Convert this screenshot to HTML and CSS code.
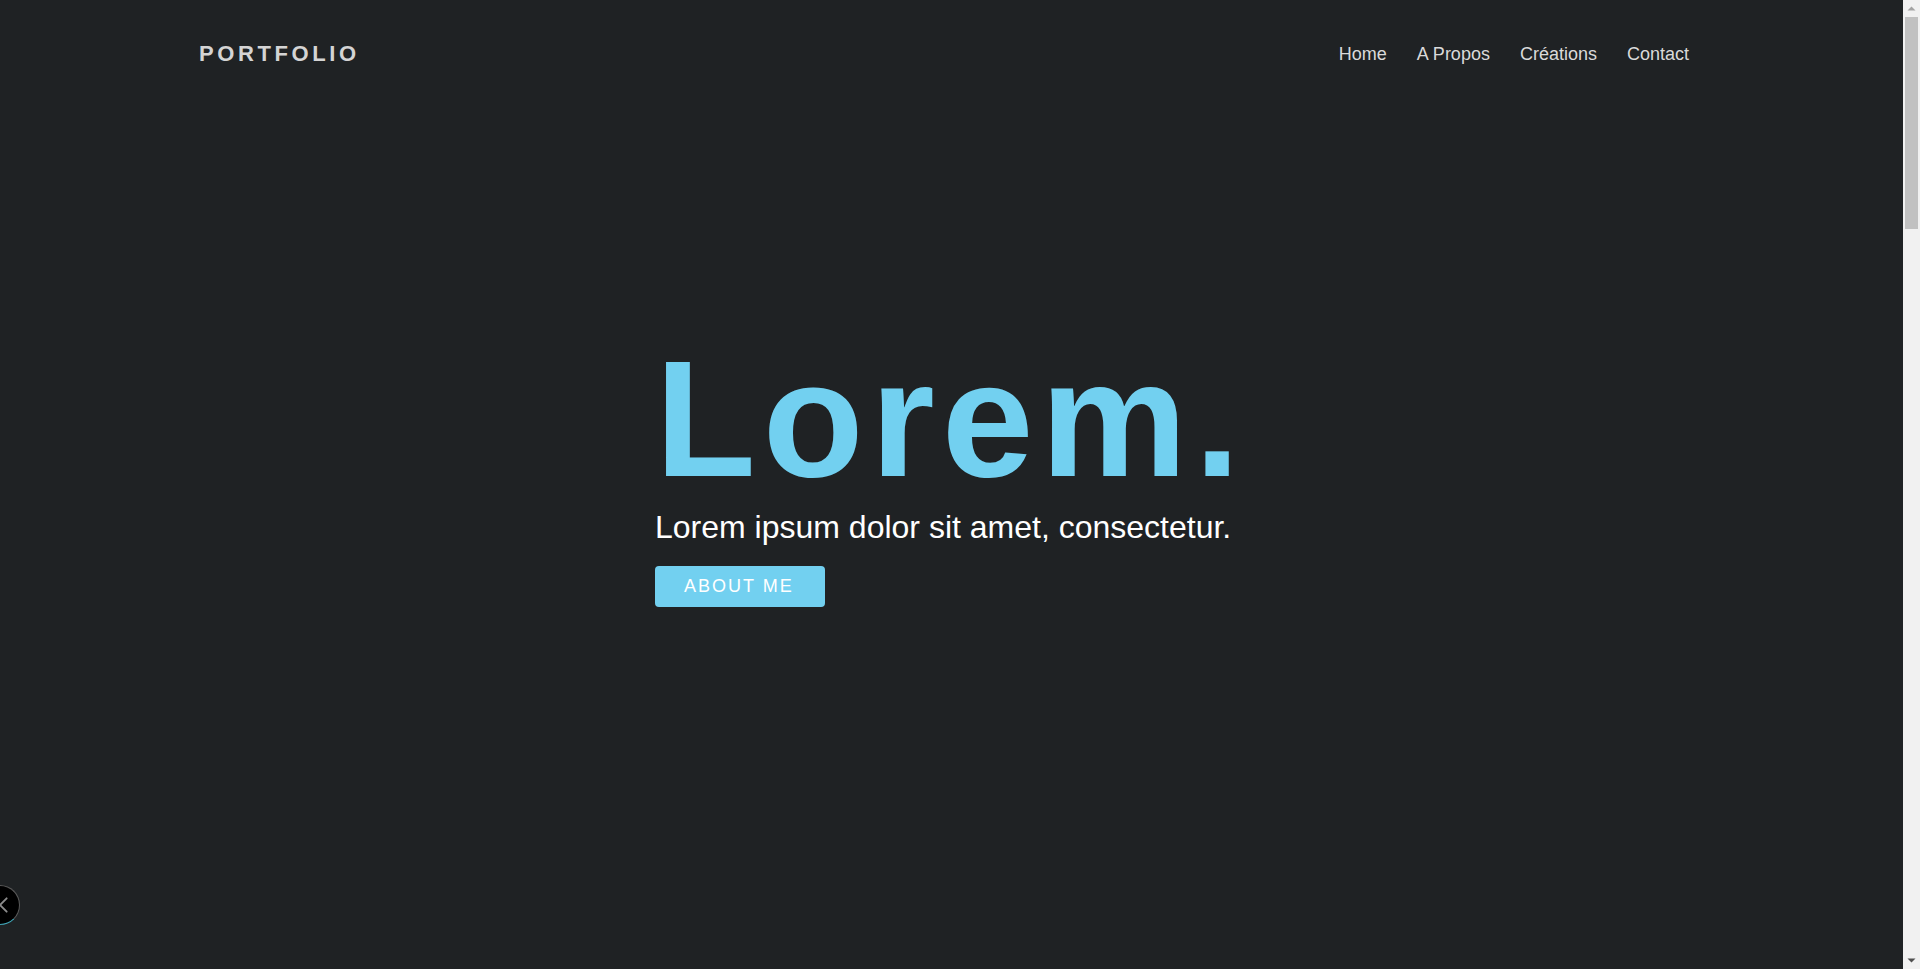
FILE: index.html
```html
<!DOCTYPE html>
<html lang="fr">
<head>
<meta charset="utf-8">
<title>Portfolio</title>
<link rel="stylesheet" href="styles.css">
</head>
<body>
<header class="site-header">
  <a class="logo" href="#home">PORTFOLIO</a>
  <nav class="main-nav">
    <a href="#home">Home</a>
    <a href="#apropos">A Propos</a>
    <a href="#creations">Créations</a>
    <a href="#contact">Contact</a>
  </nav>
</header>
<main>
  <section class="hero" id="home">
    <div class="hero-content">
      <h1 class="hero-title">Lorem.</h1>
      <p class="hero-subtitle">Lorem ipsum dolor sit amet, consectetur.</p>
      <a class="btn" href="#apropos">ABOUT ME</a>
    </div>
  </section>
  <section class="section" id="apropos"></section>
  <section class="section" id="creations"></section>
  <section class="section" id="contact"></section>
</main>
<button class="side-toggle" type="button" aria-label="Fermer">
  <svg viewBox="0 0 40 40" width="40" height="40" aria-hidden="true">
    <path d="M13 13L27 27M27 13L13 27" stroke="#8c8c8c" stroke-width="2" stroke-linecap="round" fill="none"/>
  </svg>
</button>
<div class="scrollbar" aria-hidden="true">
  <div class="scrollbar-btn">
    <svg viewBox="0 0 17 17" width="17" height="17"><path d="M4.5 10.5h8L8.5 6.5z" fill="#a3a3a3"/></svg>
  </div>
  <div class="scrollbar-track">
    <div class="scrollbar-thumb"></div>
  </div>
  <div class="scrollbar-btn">
    <svg viewBox="0 0 17 17" width="17" height="17"><path d="M4.5 6.5h8L8.5 10.5z" fill="#505050"/></svg>
  </div>
</div>
</body>
</html>
```

FILE: styles.css
```css
* {
  box-sizing: border-box;
}

html {
  background: #1f2224;
}

body {
  margin: 0 17px 0 0;
  background: #1f2224;
  font-family: "Liberation Sans", Arial, Helvetica, sans-serif;
  color: #ffffff;
}

.site-header {
  display: flex;
  align-items: center;
  justify-content: space-between;
  height: 108px;
  padding: 0 214px 0 199px;
}

.logo {
  font-size: 22px;
  font-weight: 700;
  letter-spacing: 3.6px;
  line-height: 1.15;
  color: #d4d4d4;
  text-decoration: none;
}

.main-nav {
  display: flex;
  gap: 30px;
}

.main-nav a {
  font-size: 18px;
  line-height: 1.15;
  color: #dadada;
  text-decoration: none;
}

.hero {
  height: calc(100vh - 108px);
  padding: 229px 0 0 655px;
}

.hero-content {
  display: flex;
  flex-direction: column;
  align-items: flex-start;
}

.hero-title {
  margin: 0;
  font-size: 165px;
  font-weight: 700;
  line-height: 1;
  letter-spacing: 7px;
  color: #72d0f0;
}

.hero-subtitle {
  margin: 6px 0 0;
  font-size: 32px;
  line-height: 1.2;
  color: #ffffff;
}

.btn {
  display: inline-flex;
  align-items: center;
  justify-content: center;
  height: 41px;
  margin-top: 20px;
  padding: 0 31px 0 29px;
  border-radius: 4px;
  background: #72d0f0;
  color: #ffffff;
  font-size: 18px;
  letter-spacing: 2px;
  text-decoration: none;
}

.section {
  min-height: 1102px;
}

.side-toggle {
  position: fixed;
  left: -20px;
  bottom: 44px;
  width: 40px;
  height: 40px;
  padding: 0;
  border: 1px solid #5a5a5a;
  border-bottom-color: #3fa3b4;
  border-radius: 50%;
  background: #000000;
  display: flex;
  align-items: center;
  justify-content: center;
  cursor: pointer;
}

.side-toggle svg {
  display: block;
}

/* classic desktop scrollbar drawn over the right edge */
.scrollbar {
  position: fixed;
  top: 0;
  right: 0;
  width: 17px;
  height: 100vh;
  display: flex;
  flex-direction: column;
  background: #f1f1f1;
}

.scrollbar-btn {
  flex: 0 0 17px;
  height: 17px;
}

.scrollbar-btn svg {
  display: block;
}

.scrollbar-track {
  flex: 1;
  padding: 0 2px;
}

.scrollbar-thumb {
  height: 212px;
  background: #c1c1c1;
}
```
